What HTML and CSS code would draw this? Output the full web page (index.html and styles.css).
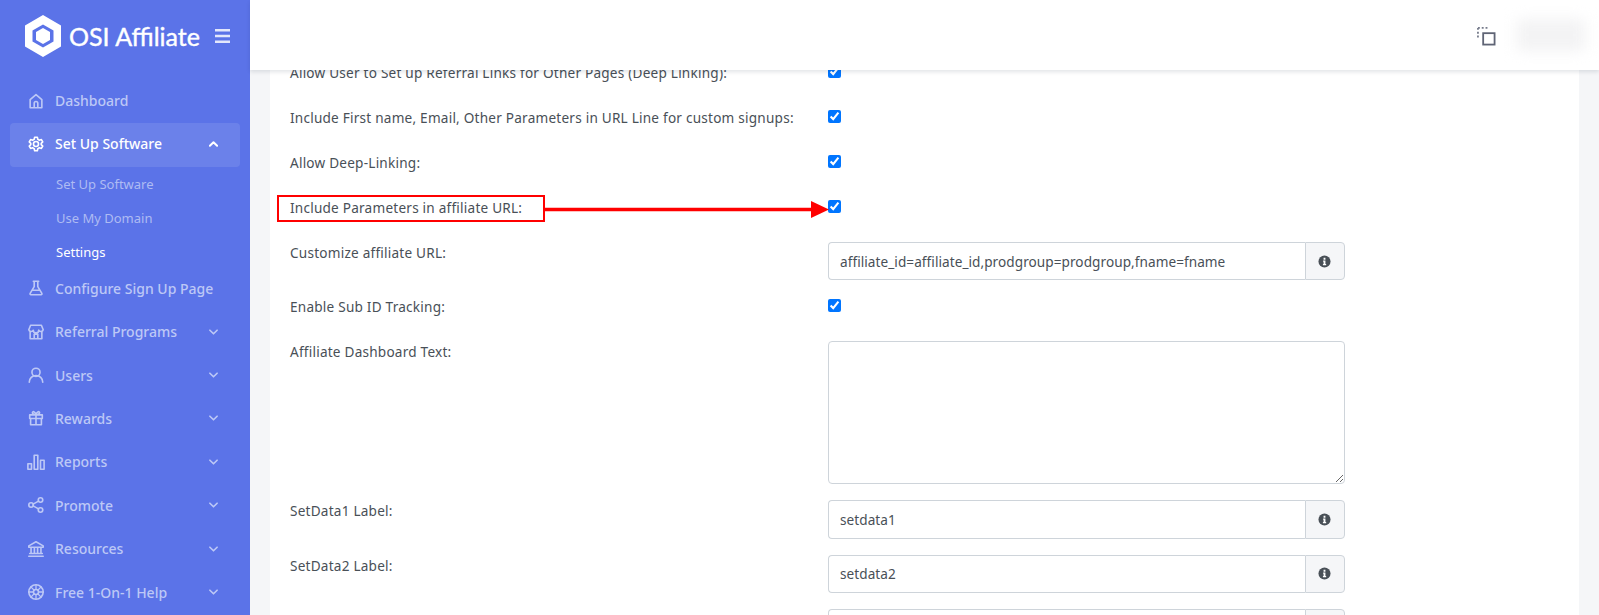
FILE: index.html
```html
<!DOCTYPE html>
<html lang="en">
<head>
<meta charset="utf-8">
<title>OSI Affiliate - Settings</title>
<link rel="stylesheet" href="styles.css">
</head>
<body>
<div class="app">
  <aside class="sidebar">
    <div class="brand">
      <svg class="brand-mark" viewBox="0 0 38 42"><path fill="#fff" fill-rule="evenodd" d="M19 0 37 10.500V31.500L19 42 1 31.500V10.500ZM19 9.500 8.500 15.500V26.500L19 32.500 29.500 26.500V15.500Z"/><path fill="#fff" d="M19 13 26 17V25L19 29 12 25V17Z"/></svg>
      <span class="brand-name">OSI Affiliate</span>
      <svg class="burger" viewBox="0 0 15 14"><path d="M0 1.250H15M0 7H15M0 12.750H15" stroke="#e3e7fb" stroke-width="2.500"/></svg>
    </div>
    <nav class="nav">
      <a class="item"><svg class="ico" viewBox="0 0 20 20"><path d="M3.500 17.500V8.500L10 3l6.500 5.500v9zM8 17.500v-5a2 2 0 0 1 4 0v5"/></svg><span>Dashboard</span></a>
      <a class="item active"><svg class="ico" viewBox="0 0 20 20"><circle cx="10" cy="10" r="2.800"/><path d="M8.500 2.500h3l.5 2.300 1.800 1 2.200-.7 1.500 2.600-1.700 1.600v1.400l1.700 1.600-1.500 2.600-2.200-.7-1.800 1-.5 2.300h-3l-.5-2.300-1.800-1-2.200.7-1.500-2.600 1.700-1.600V9.300L2.500 7.700 4 5.100l2.200.7 1.800-1z"/></svg><span>Set Up Software</span><svg class="chev" viewBox="0 0 10 6"><path d="M1 5l4-4 4 4"/></svg></a>
      <div class="sub">
        <a class="sub-item">Set Up Software</a>
        <a class="sub-item">Use My Domain</a>
        <a class="sub-item current">Settings</a>
      </div>
      <a class="item"><svg class="ico" viewBox="0 0 20 20"><path d="M7 2.500h6M8 2.500v6L3.500 16a1 1 0 0 0 1 1.500h11a1 1 0 0 0 1-1.500L12 8.500v-6M6 12.500h8"/></svg><span>Configure Sign Up Page</span></a>
      <a class="item"><svg class="ico" viewBox="0 0 20 20"><path d="M4 2.500h12l2 5a2.700 2.700 0 0 1-5 .5 3 3 0 0 1-6 0 2.700 2.700 0 0 1-5-.5zM3.500 10v7.500h13V10M8 17.500v-5h4v5"/></svg><span>Referral Programs</span><svg class="chev" viewBox="0 0 10 6"><path d="M1 1l4 4 4-4"/></svg></a>
      <a class="item"><svg class="ico" viewBox="0 0 20 20"><circle cx="10" cy="7" r="4.500"/><path d="M2.500 18a7.500 7.500 0 0 1 15 0"/></svg><span>Users</span><svg class="chev" viewBox="0 0 10 6"><path d="M1 1l4 4 4-4"/></svg></a>
      <a class="item"><svg class="ico" viewBox="0 0 20 20"><path d="M3 6.500h14v4H3zM4 10.500v7h12v-7M10 6.500v11M10 6.500C8 6.500 6 5.500 6 4s3-2 4 2.500C11 2 14 2.500 14 4s-2 2.500-4 2.500"/></svg><span>Rewards</span><svg class="chev" viewBox="0 0 10 6"><path d="M1 1l4 4 4-4"/></svg></a>
      <a class="item"><svg class="ico" viewBox="0 0 20 20"><path d="M1 12h4v6H1zM8 2.500h4V18H8zM15 8h4v10h-4z"/></svg><span>Reports</span><svg class="chev" viewBox="0 0 10 6"><path d="M1 1l4 4 4-4"/></svg></a>
      <a class="item"><svg class="ico" viewBox="0 0 20 20"><circle cx="4.500" cy="10" r="2.500"/><circle cx="15" cy="4.500" r="2.500"/><circle cx="15" cy="15.500" r="2.500"/><path d="M6.800 9 12.800 5.700M6.800 11l6 3.300"/></svg><span>Promote</span><svg class="chev" viewBox="0 0 10 6"><path d="M1 1l4 4 4-4"/></svg></a>
      <a class="item"><svg class="ico" viewBox="0 0 20 20"><path d="M10 2 18 6.500v1.500H2V6.500zM4.500 8v7M8.200 8v7M11.800 8v7M15.500 8v7M3 15h14M2 18h16"/></svg><span>Resources</span><svg class="chev" viewBox="0 0 10 6"><path d="M1 1l4 4 4-4"/></svg></a>
      <a class="item"><svg class="ico" viewBox="0 0 20 20"><circle cx="10" cy="10" r="8"/><circle cx="10" cy="10" r="2.800"/><path class="spokes" d="M4.300 4.300 8 8M15.700 4.300 12 8M4.300 15.700 8 12M15.700 15.700 12 12M10 2v5M10 13v5M2 10h5M13 10h5"/></svg><span>Free 1-On-1 Help</span><svg class="chev" viewBox="0 0 10 6"><path d="M1 1l4 4 4-4"/></svg></a>
    </nav>
  </aside>
  <div class="main">
    <header class="topbar">
      <svg class="fs-icon" viewBox="0 0 20 20"><path class="dash" d="M1 1H13M1 1V13"/><rect x="6.500" y="6.500" width="12" height="12"/></svg>
      <div class="avatar"></div>
    </header>
    <div class="content">
      <form class="card">
        <div class="row check"><label class="lbl">Allow User to Set up Referral Links for Other Pages (Deep Linking):</label><input type="checkbox" checked></div>
        <div class="row check"><label class="lbl">Include First name, Email, Other Parameters in URL Line for custom signups:</label><input type="checkbox" checked></div>
        <div class="row check"><label class="lbl">Allow Deep-Linking:</label><input type="checkbox" checked></div>
        <div class="row check"><label class="lbl">Include Parameters in affiliate URL:</label><input type="checkbox" checked>
          <span class="callout"></span>
          <svg class="arrow" viewBox="0 0 284 18"><path d="M0 7.500H268V9.500H0z" stroke="#f00" stroke-width="1.500" fill="#f00"/><path d="M266 0 284 8.500 266 17z" fill="#f00"/></svg>
        </div>
        <div class="row"><label class="lbl">Customize affiliate URL:</label>
          <div class="group"><input class="field" type="text" value="affiliate_id=affiliate_id,prodgroup=prodgroup,fname=fname"><span class="addon"><svg class="info" viewBox="0 0 14 14"><circle cx="7" cy="7" r="6.500"/><path class="i" d="M6 3h2v2H6zM5.500 6h2.500v3.800h.8V11H5.300V9.800H6V7.200h-.5z"/></svg></span></div>
        </div>
        <div class="row check"><label class="lbl">Enable Sub ID Tracking:</label><input type="checkbox" checked></div>
        <div class="row"><label class="lbl">Affiliate Dashboard Text:</label><textarea class="area"></textarea></div>
        <div class="row"><label class="lbl">SetData1 Label:</label>
          <div class="group"><input class="field" type="text" value="setdata1"><span class="addon"><svg class="info" viewBox="0 0 14 14"><circle cx="7" cy="7" r="6.500"/><path class="i" d="M6 3h2v2H6zM5.500 6h2.500v3.800h.8V11H5.300V9.800H6V7.200h-.5z"/></svg></span></div>
        </div>
        <div class="row"><label class="lbl">SetData2 Label:</label>
          <div class="group"><input class="field" type="text" value="setdata2"><span class="addon"><svg class="info" viewBox="0 0 14 14"><circle cx="7" cy="7" r="6.500"/><path class="i" d="M6 3h2v2H6zM5.500 6h2.500v3.800h.8V11H5.300V9.800H6V7.200h-.5z"/></svg></span></div>
        </div>
        <div class="row"><label class="lbl"></label>
          <div class="group"><input class="field" type="text" value=""><span class="addon"></span></div>
        </div>
      </form>
    </div>
  </div>
</div>
</body>
</html>
```
FILE: styles.css
```css
* { box-sizing: border-box; }
html, body { margin: 0; height: 100%; overflow: hidden; }
body { font-family: "Noto Sans", "Liberation Sans", sans-serif; font-size: 13.6px; color: #495057; background: #f5f6f8; }
.app { display: flex; height: 615px; }
.sidebar { width: 250px; flex: none; background: #5b73e8; overflow: hidden; }
.brand { display: flex; align-items: center; height: 79px; padding: 0 0 8px 24px; }
.brand-mark { width: 38px; height: 42px; flex: none; }
.brand-name { margin-left: 7px; font-family: Lato, sans-serif; font-size: 25px; font-weight: 400; color: #fff; white-space: nowrap; -webkit-text-stroke: .4px #fff; }
.burger { width: 15px; height: 14px; margin-left: 15px; flex: none; }
.nav { display: flex; flex-direction: column; }
.item { display: flex; align-items: center; height: 43.450px; margin: 0 10px; padding: 0 22px 0 17px; border-radius: 4px; font-size: 14px; font-weight: 500; color: #bdc8f6; white-space: nowrap; }
.item span { margin-left: 10px; }
.ico { width: 18px; height: 18px; flex: none; fill: none; stroke: currentColor; stroke-width: 1.800; stroke-linejoin: round; stroke-linecap: round; }
.ico .spokes { stroke-width: 1.400; }
.chev { width: 9px; height: 6px; margin-left: auto; flex: none; fill: none; stroke: currentColor; stroke-width: 1.800; stroke-linecap: round; stroke-linejoin: round; }
.item.active { margin-top: 1px; margin-bottom: -1px; padding-bottom: 3px; background: rgba(255,255,255,.1); color: #fff; }
.item.active .chev { stroke-width: 2.200; }
.sub { display: flex; flex-direction: column; padding-top: 1.300px; margin-bottom: -2.400px; }
.sub-item { display: flex; align-items: center; height: 33.900px; padding-left: 56px; font-size: 13px; color: #aebbf3; }
.sub-item.current { color: #fff; }
.main { flex: 1; min-width: 0; display: flex; flex-direction: column; }
.topbar { position: relative; z-index: 2; flex: none; height: 70px; display: flex; align-items: center; justify-content: flex-end; background: #fff; box-shadow: 0 2px 4px rgba(15,34,58,.12); padding-right: 14px; }
.fs-icon { width: 19px; height: 19px; fill: none; stroke: #5f6475; stroke-width: 1.900; margin: 2px 21px 0 0; }
.fs-icon .dash { stroke-dasharray: 2 2; stroke: #777c8c; }
.avatar { width: 68px; height: 32px; background: #f3f3f4; filter: blur(7px); }
.content { flex: 1; min-height: 0; overflow: hidden; padding: 0 20px; }
.card { background: #fff; padding: 0 20px; margin-top: -8px; min-height: 700px; }
.row { position: relative; display: flex; align-items: flex-start; margin-bottom: 16px; }
.row.check { min-height: 29px; }
.lbl { flex: none; width: 538px; line-height: 22px; font-size: 13.6px; letter-spacing: .22px; white-space: nowrap; }
.row.check input { width: 13px; height: 13px; margin: 3px 0 0; }
.group { display: flex; width: 517px; height: 38.400px; }
.field { flex: 1; min-width: 0; height: 100%; padding: 0 11px; border: 1px solid #ced4da; border-right: 0; border-radius: 4px 0 0 4px; font: inherit; letter-spacing: .06px; color: #495057; background: #fff; }
.addon { flex: none; width: 40px; display: flex; align-items: center; justify-content: center; padding-right: 1px; background: #f5f6f8; border: 1px solid #ced4da; border-radius: 0 4px 4px 0; }
.info { width: 13px; height: 13px; }
.info circle { fill: #495057; }
.info .i { fill: #fff; }
.area { display: block; width: 517px; height: 143px; padding: 8px 12px; border: 1px solid #ced4da; border-radius: 4px; font: inherit; color: #495057; background: #fff; }
.callout { position: absolute; left: -13px; top: -2px; width: 268px; height: 27px; border: 2px solid #f00; }
.arrow { position: absolute; left: 255px; top: 4px; width: 284px; height: 18px; }
```
